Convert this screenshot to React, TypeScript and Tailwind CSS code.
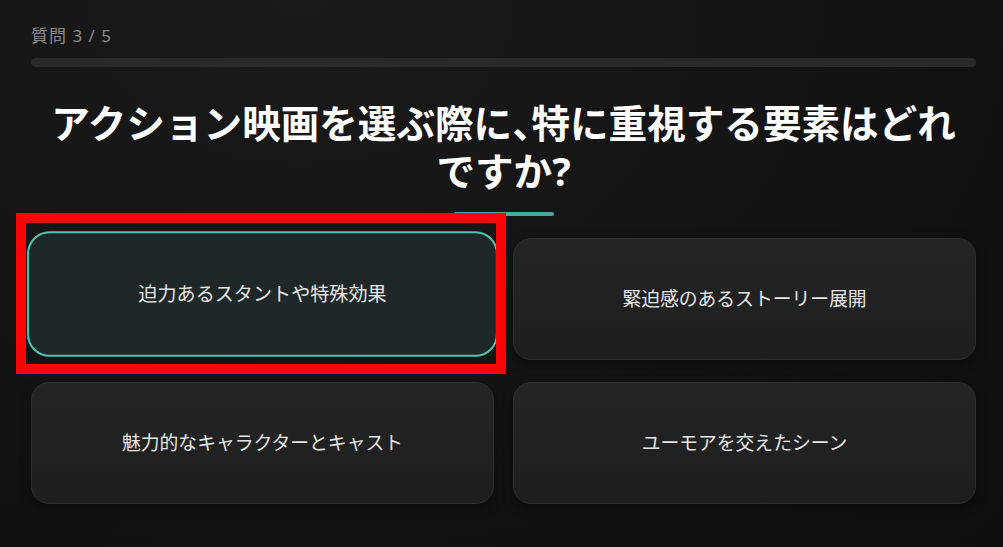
const options = [
  "迫力あるスタントや特殊効果",
  "緊迫感のあるストーリー展開",
  "魅力的なキャラクターとキャスト",
  "ユーモアを交えたシーン",
];

export default function App() {
  const selected = 0;
  return (
    <main
      className="min-h-[547px] bg-[radial-gradient(ellipse_at_30%_0%,#1a1a1a_0%,#141414_50%,#0e0e0e_100%)] pl-[31px] pr-[27px] pt-[24px] text-white"
      style={{ fontFamily: '"Noto Sans", "Noto Sans CJK JP", sans-serif' }}
    >
      <div className="text-[17px] leading-6 tracking-[1px] text-[#8c8c8c]">質問 3 / 5</div>
      <div className="mt-[10px] h-[9px] w-full rounded-full bg-[#2a2a2a]" />

      <h1 className="mt-[32px] text-center text-[38.6px] font-bold leading-[48px] text-white">
        アクション映画を選ぶ際に<span className="tracking-[-0.5em]">、</span>特に重視する要素はどれ
        <br />
        ですか?
      </h1>
      <div className="mx-auto mt-[17px] h-[4px] w-[100px] rounded-full bg-[#4aa89c]" />

      <div className="mt-[22px] grid grid-cols-2 gap-x-[19px] gap-y-[22px]">
        {options.map((text, i) => (
          <div key={text} className="relative h-[122px]">
            {i === selected ? (
              <>
                <button className="flex h-full w-full -translate-y-[5px] scale-x-[1.017] scale-y-[1.03] items-center justify-center rounded-[22px] border-2 border-[#52c2b4] bg-[#1f2828] text-[18.8px] text-[#e6e6e6]">
                  {text}
                </button>
                <div className="pointer-events-none absolute -left-[15px] -right-[12px] -top-[25px] -bottom-[14px] border-[10px] border-[#fb0606]" />
              </>
            ) : (
              <button className="flex h-full w-full items-center justify-center rounded-[18px] border border-[#2f2f2f] bg-gradient-to-b from-[#242525] to-[#1e1e1e] text-[18.8px] text-[#e6e6e6] shadow-[0_4px_12px_rgba(0,0,0,0.35)]">
                {text}
              </button>
            )}
          </div>
        ))}
      </div>
    </main>
  );
}
